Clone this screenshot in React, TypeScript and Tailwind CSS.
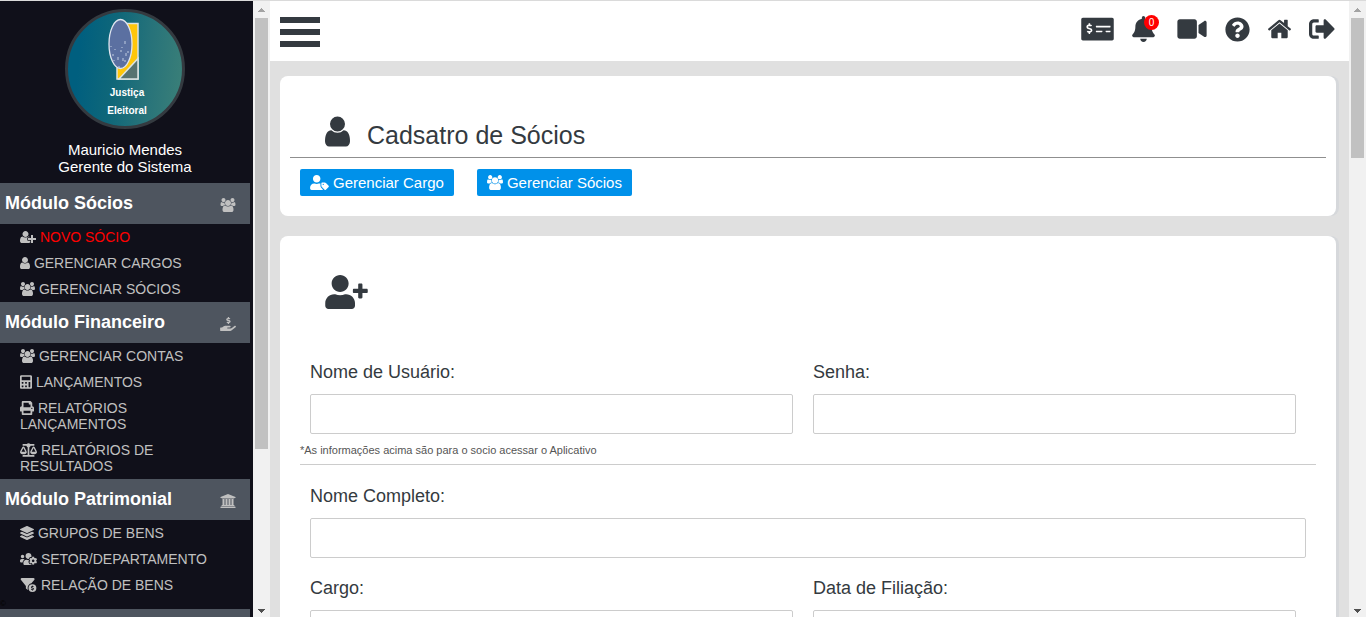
import { Fragment } from 'react';
import type { ComponentType } from 'react';
import {
  FaBalanceScale,
  FaBell,
  FaCalculator,
  FaHandHoldingUsd,
  FaLayerGroup,
  FaMoneyCheckAlt,
  FaPrint,
  FaQuestionCircle,
  FaSignOutAlt,
  FaUserPlus,
  FaUsersCog,
  FaUserTag,
  FaVideo,
} from 'react-icons/fa';
import { FaFilterCircleDollar } from 'react-icons/fa6';

type IconProps = { className?: string };
type Icon = ComponentType<IconProps>;

const UserIcon = ({ className }: IconProps) => (
  <svg viewBox="256 0 1280 1792" fill="currentColor" className={className}>
    <path d="M1536 1399q0 109-62.5 187t-150.5 78h-854q-88 0-150.5-78t-62.5-187q0-85 8.5-160.5t31.5-152 58.5-131 94-89 134.5-34.5q131 128 313 128t313-128q76 0 134.5 34.5t94 89 58.5 131 31.5 152 8.5 160.5zm-256-887q0 159-112.5 271.5t-271.5 112.5-271.5-112.5-112.5-271.5 112.5-271.5 271.5-112.5 271.5 112.5 112.5 271.5z" />
  </svg>
);

const UsersIcon = ({ className }: IconProps) => (
  <svg viewBox="0 0 1920 1792" fill="currentColor" className={className}>
    <path d="M593 896q-162 5-265 128h-134q-82 0-138-40.5t-56-118.5q0-353 124-353 6 0 43.5 21t97.5 42.5 119 21.5q67 0 133-23-5 37-5 66 0 139 81 256zm1071 637q0 120-73 189.5t-194 69.5h-874q-121 0-194-69.5t-73-189.5q0-53 3.5-103.5t14-109 26.5-108.5 43-97.5 62-81 85.5-53.5 111.5-20q10 0 43 21.5t73 48 107 48 135 21.5 135-21.5 107-48 73-48 43-21.5q61 0 111.5 20t85.5 53.5 62 81 43 97.5 26.5 108.5 14 109 3.5 103.5zm-1024-1277q0 106-75 181t-181 75-181-75-75-181 75-181 181-75 181 75 75 181zm704 384q0 159-112.5 271.5t-271.5 112.5-271.5-112.5-112.5-271.5 112.5-271.5 271.5-112.5 271.5 112.5 112.5 271.5zm576 225q0 78-56 118.5t-138 40.5h-134q-103-123-265-128 81-117 81-256 0-29-5-66 66 23 133 23 59 0 119-21.5t97.5-42.5 43.5-21q124 0 124 353zm-128-609q0 106-75 181t-181 75-181-75-75-181 75-181 181-75 181 75 75 181z" />
  </svg>
);

const NewUserIcon = ({ className }: IconProps) => (
  <svg viewBox="0 0 2048 1792" fill="currentColor" className={className}>
    <path d="M704 896q-159 0-271.5-112.5t-112.5-271.5 112.5-271.5 271.5-112.5 271.5 112.5 112.5 271.5-112.5 271.5-271.5 112.5zm960 128h352q13 0 22.5 9.5t9.5 22.5v192q0 13-9.5 22.5t-22.5 9.5h-352v352q0 13-9.5 22.5t-22.5 9.5h-192q-13 0-22.5-9.5t-9.5-22.5v-352h-352q-13 0-22.5-9.5t-9.5-22.5v-192q0-13 9.5-22.5t22.5-9.5h352v-352q0-13 9.5-22.5t22.5-9.5h192q13 0 22.5 9.5t9.5 22.5v352zm-736 224q0 52 38 90t90 38h256v238q-68 50-171 50h-874q-121 0-194-69t-73-190q0-53 3.5-103.5t14-109 26.5-108.5 43-97.5 62-81 85.5-53.5 111.5-20q19 0 39 17 79 61 154.5 91.5t164.5 30.5 164.5-30.5 154.5-91.5q20-17 39-17 132 0 217 96h-223q-52 0-90 38t-38 90v192z" />
  </svg>
);

const BankIcon = ({ className }: IconProps) => (
  <svg viewBox="0 0 1920 1792" fill="currentColor" className={className}>
    <path d="M960 0l960 384v128h-128q0 26-20.5 45t-48.5 19h-1526q-28 0-48.5-19t-20.5-45h-128v-128zm-704 640h256v768h128v-768h256v768h128v-768h256v768h128v-768h256v768h59q28 0 48.5 19t20.5 45v64h-1664v-64q0-26 20.5-45t48.5-19h59v-768zm1595 960q28 0 48.5 19t20.5 45v128h-1920v-128q0-26 20.5-45t48.5-19h1782z" />
  </svg>
);

const HomeIcon = ({ className }: IconProps) => (
  <svg viewBox="90 0 1612 1792" fill="currentColor" className={className}>
    <path d="M1472 992v480q0 26-19 45t-45 19h-384v-384h-256v384h-384q-26 0-45-19t-19-45v-480q0-1 .5-3t.5-3l575-474 575 474q1 2 1 6zm223-69l-62 74q-8 9-21 11h-3q-13 0-21-7l-692-577-692 577q-12 8-24 7-13-2-21-11l-62-74q-8-10-7-23.5t11-21.5l719-599q32-26 76-26t76 26l244 204v-195q0-14 9-23t23-9h192q14 0 23 9t9 23v408l219 182q10 8 11 21.5t-7 23.5z" />
  </svg>
);

const modules: {
  title: string;
  icon: Icon;
  items: { label: string; icon: Icon; size: string; active?: boolean }[];
}[] = [
  {
    title: 'Módulo Sócios',
    icon: UsersIcon,
    items: [
      { label: 'NOVO SÓCIO', icon: NewUserIcon, size: 'w-4', active: true },
      { label: 'GERENCIAR CARGOS', icon: UserIcon, size: 'w-[10px]' },
      { label: 'GERENCIAR SÓCIOS', icon: UsersIcon, size: 'w-[15px]' },
    ],
  },
  {
    title: 'Módulo Financeiro',
    icon: FaHandHoldingUsd,
    items: [
      { label: 'GERENCIAR CONTAS', icon: UsersIcon, size: 'w-[15px]' },
      { label: 'LANÇAMENTOS', icon: FaCalculator, size: 'w-3' },
      { label: 'RELATÓRIOS LANÇAMENTOS', icon: FaPrint, size: 'w-[14px]' },
      { label: 'RELATÓRIOS DE RESULTADOS', icon: FaBalanceScale, size: 'w-[17px]' },
    ],
  },
  {
    title: 'Módulo Patrimonial',
    icon: BankIcon,
    items: [
      { label: 'GRUPOS DE BENS', icon: FaLayerGroup, size: 'w-[14px]' },
      { label: 'SETOR/DEPARTAMENTO', icon: FaUsersCog, size: 'w-[17px]' },
      { label: 'RELAÇÃO DE BENS', icon: FaFilterCircleDollar, size: 'w-[17px]' },
    ],
  },
];

const ScrollBar = ({ thumb }: { thumb: string }) => (
  <div className="flex w-[17px] shrink-0 flex-col items-center bg-[#f1f1f1]">
    <svg viewBox="0 0 17 17" className="size-[17px] shrink-0" shapeRendering="crispEdges">
      <path d="M5 11h7v-1h-1v-1h-1v-1h-1v-1h-1v1h-1v1h-1v1h-1z" fill="#a3a3a3" />
    </svg>
    <div className="min-h-0 w-full flex-1 px-[2px]">
      <div className={`bg-[#c1c1c1] ${thumb}`} />
    </div>
    <svg viewBox="0 0 17 17" className="size-[17px] shrink-0" shapeRendering="crispEdges">
      <path d="M5 9h7v1h-1v1h-1v1h-1v1h-1v-1h-1v-1h-1v-1h-1z" fill="#505050" />
    </svg>
  </div>
);

const Avatar = () => (
  <svg viewBox="0 0 120 120" className="mx-auto size-[120px]" role="img" aria-label="Justiça Eleitoral">
    <defs>
      <linearGradient id="avatar" x1="0" y1="0.45" x2="1" y2="0.55">
        <stop offset="0.1" stopColor="#005f7f" />
        <stop offset="0.4" stopColor="#0f6779" />
        <stop offset="0.7" stopColor="#27737a" />
        <stop offset="1" stopColor="#3a7f78" />
      </linearGradient>
    </defs>
    <circle cx="60" cy="60" r="58.5" fill="url(#avatar)" stroke="#343a40" strokeWidth="3" />
    <path d="M52 14.5H73V70H52Z" fill="#ffc60a" stroke="#dce4e2" strokeWidth="1.5" />
    <path d="M73 49.5V70H54Z" fill="#587370" stroke="#dce4e2" strokeWidth="1.5" />
    <ellipse cx="55.5" cy="35" rx="11.5" ry="24.5" fill="#5b70a1" stroke="#dfe5ef" strokeWidth="1.3" />
    <path d="M46 37v1m2 7v2m2-7v1m3 7v3m3-10v2m2 6v3m2-20v3m-3 3v1m4 5v3m2-5v2m-9 13v2m-5-8v1m11-1v2" stroke="#c0cbe0" fill="none" />
    <g fill="#fff" fontFamily="Liberation Sans, Arial, sans-serif" fontWeight="bold" fontSize="10" textAnchor="middle">
      <text x="62" y="87">Justiça</text>
      <text x="62" y="105">Eleitoral</text>
    </g>
  </svg>
);

const Sidebar = () => (
  <aside className="flex w-[270px] shrink-0 overflow-hidden bg-[#10101a]">
    <div className="flex-1 overflow-hidden pr-[3px]">
      <div className="pt-2 text-center text-[15px] leading-[17px] text-white">
        <Avatar />
        <p className="mt-3">Mauricio Mendes</p>
        <p>Gerente do Sistema</p>
      </div>
      <nav className="mt-2">
        {modules.map((mod) => (
          <Fragment key={mod.title}>
            <h2 className="flex h-[41px] items-center justify-between bg-[#4e555f] pr-[14px] pb-[2px] pl-[5px] text-lg leading-5 font-bold text-white">
              {mod.title}
              <mod.icon className="mt-1 h-[14px] w-4 text-[#c0c0c0]" />
            </h2>
            <ul className="text-[14px] leading-4 text-[#c0c0c0]">
              {mod.items.map((item) => (
                <li key={item.label} className="py-[5px] pr-5 pl-5">
                  <a href="#" className="block">
                    <item.icon className={`inline h-[14px] align-[-2px] ${item.size}`} />{' '}
                    <span className={item.active ? 'text-[#ff0000]' : ''}>{item.label}</span>
                  </a>
                </li>
              ))}
            </ul>
          </Fragment>
        ))}
        <p className="h-[11px] text-[8px] leading-[11px] text-black">©</p>
        <div className="h-[41px] bg-[#4e555f]" />
      </nav>
    </div>
    <ScrollBar thumb="h-[74%]" />
  </aside>
);

const TopBar = () => (
  <header className="flex h-[60px] shrink-0 items-center justify-between bg-white pr-[14px] pl-[10px] text-[#343a40]">
    <button type="button" aria-label="Menu" className="flex w-10 flex-col gap-[6px] pt-[2px]">
      <span className="h-[6px] bg-[#343a40]" />
      <span className="h-[6px] bg-[#343a40]" />
      <span className="h-[6px] bg-[#343a40]" />
    </button>
    <div className="flex items-center gap-[18px] pb-1">
      <a href="#" aria-label="Financeiro"><FaMoneyCheckAlt className="h-[26px] w-[33px]" /></a>
      <a href="#" aria-label="Notificações" className="relative mr-1">
        <FaBell className="h-[26px] w-[23px]" />
        <span className="absolute -top-[1px] left-3 flex size-[15px] items-center justify-center rounded-full bg-[#ff0000] text-[10px] leading-none text-white">
          0
        </span>
      </a>
      <a href="#" aria-label="Vídeo"><FaVideo className="h-[26px] w-[30px]" /></a>
      <a href="#" aria-label="Ajuda"><FaQuestionCircle className="size-[25px]" /></a>
      <a href="#" aria-label="Início"><HomeIcon className="h-[26px] w-[23px]" /></a>
      <a href="#" aria-label="Sair"><FaSignOutAlt className="size-[26px]" /></a>
    </div>
  </header>
);

const Field = ({ id, label, type = 'text' }: { id: string; label: string; type?: string }) => (
  <div className="px-[10px]">
    <label htmlFor={id} className="mb-[11px] block text-lg leading-[21px]">{label}</label>
    <input id={id} type={type} className="block h-10 w-full rounded-[2px] border border-[#ccc] bg-white px-2" />
  </div>
);

const App = () => {
  return (
    <div className="flex h-screen overflow-hidden border-t border-[#dadada] bg-[#e0e0e0] font-['Liberation_Sans',Arial,sans-serif] text-[#343a40]">
      <Sidebar />
      <div className="flex min-w-0 flex-1 flex-col overflow-hidden">
        <TopBar />
        <main className="flex-1 overflow-hidden pt-[15px] pr-[13px] pl-[10px]">
          <section className="rounded-[8px] bg-white px-[10px] pt-[38px] pb-5 shadow-[3px_0_0_#d6d8db]">
            <div className="flex items-end gap-[17px] pl-[35px]">
              <UserIcon className="h-[35px] w-[25px]" />
              <h1 className="text-[25px] leading-7">Cadsatro de Sócios</h1>
            </div>
            <hr className="mt-2 border-[#8f8f8f]" />
            <div className="mt-[11px] flex gap-[23px] px-[10px] text-[15px] leading-[17px] text-white">
              <button type="button" className="flex h-[27px] items-center gap-1 rounded-[2px] bg-[#0091ea] px-[10px]">
                <FaUserTag className="h-[15px] w-[19px]" />
                Gerenciar Cargo
              </button>
              <button type="button" className="flex h-[27px] items-center gap-1 rounded-[2px] bg-[#0091ea] px-[10px]">
                <UsersIcon className="h-[15px] w-4" />
                Gerenciar Sócios
              </button>
            </div>
          </section>

          <section className="mt-5 rounded-[8px] bg-white px-5 pt-[39px] pb-5 shadow-[3px_0_0_#d6d8db]">
            <FaUserPlus className="ml-[25px] h-[34px] w-[43px]" />
            <form className="mt-[53px]">
              <div className="grid grid-cols-[49.5%_49.5%]">
                <Field id="usuario" label="Nome de Usuário:" />
                <Field id="senha" label="Senha:" type="password" />
              </div>
              <p className="mt-[10px] text-[11px] leading-[13px] text-[#555]">
                *As informações acima são para o socio acessar o Aplicativo
              </p>
              <hr className="mt-[7px] mb-[21px] border-[#ccc]" />
              <Field id="nome" label="Nome Completo:" />
              <div className="mt-5 grid grid-cols-[49.5%_49.5%]">
                <Field id="cargo" label="Cargo:" />
                <Field id="filiacao" label="Data de Filiação:" />
              </div>
            </form>
          </section>
        </main>
      </div>
      <ScrollBar thumb="h-[24%]" />
    </div>
  );
};

export default App;
